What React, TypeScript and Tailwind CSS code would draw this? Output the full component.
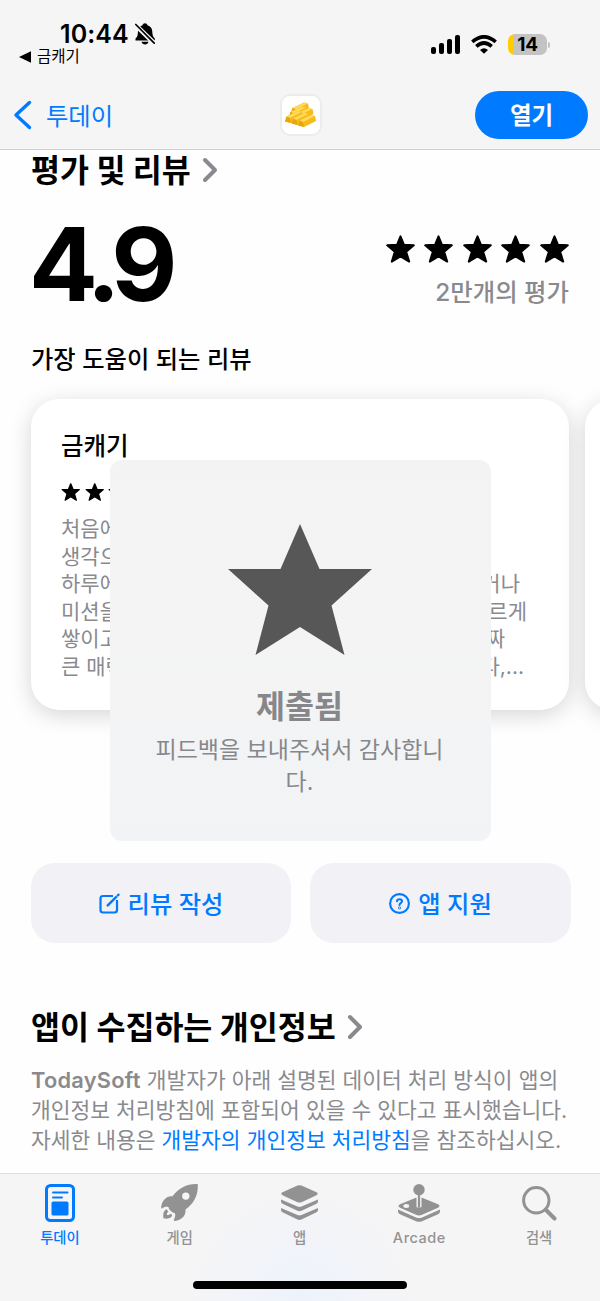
import type { ReactNode } from "react";
import clsx from "clsx";

const REVIEW_LINES = [
  { start: "처음에", end: "" },
  { start: "생각으", end: "" },
  { start: "하루에", end: "거나", pad: "pr-[19px]" },
  { start: "미션을", end: "르게", pad: "pr-[12px]" },
  { start: "쌓이고", end: "짜", pad: "pr-[34px]" },
  { start: "큰 매력", end: "다,...", pad: "pr-[15px]" },
];

function Star({ className }: { className: string }) {
  return (
    <svg viewBox="0 0 29 28" className={className} fill="currentColor" stroke="currentColor" strokeWidth="2" strokeLinejoin="round">
      <path d="M14.5 1.300 18 9.800 27.800 10.300 20.200 16.800 23.200 26.600 14.500 21.400 5.800 26.600 8.800 16.800 1.200 10.300 11 9.800Z" />
    </svg>
  );
}

function Chevron() {
  return (
    <svg viewBox="0 0 16 26" className="h-[26px] w-[16px] text-[#8a8a8e]" fill="none" stroke="currentColor" strokeWidth="4" strokeLinecap="round" strokeLinejoin="round">
      <path d="M3 3 13 13 3 23" />
    </svg>
  );
}

function StatusBar() {
  return (
    <div className="flex h-[80px] justify-between">
      <div className="pt-[18px]">
        <div className="flex h-[30px] items-center pt-px pl-[60px]">
          <span className="text-[25px] leading-[30px] font-semibold tracking-[0.100px]">10:44</span>
          <svg viewBox="0 0 20 22" className="ml-[6px] h-[22px] w-[20px]">
            <path d="M.5 17.500V15.500C3 13.500 2.700 11 3 8 3.400 4.600 5.500 3 7.500 2.300 8-.4 12-.4 12.500 2.300 15.500 3.300 17 5.400 17.200 8 17.500 11.500 17.500 13.500 19.800 15.500V17.500Z" />
            <path d="M6.500 18.800H13.500C12.800 22.300 7.300 22.300 6.500 18.800Z" />
            <path d="M0 1.500 20 21" stroke="#f5f5f6" strokeWidth="4.600" />
            <path d="M.8 1.500 19.200 20.200" stroke="black" strokeWidth="1.700" strokeLinecap="round" />
          </svg>
        </div>
        <div className="flex h-[17px] items-center gap-[6px] pl-[19px]">
          <svg viewBox="0 0 11 11" className="size-[12px]">
            <path d="M0 5.500 11 .3V10.700Z" />
          </svg>
          <span className="text-[15.500px] leading-[17px]">금캐기</span>
        </div>
      </div>
      <div className="mt-[34px] flex h-[21px] items-center pr-[50px]">
        <div className="flex h-[19px] items-end gap-[3px]">
          <div className="h-[7px] w-[5px] rounded-[2px] bg-black" />
          <div className="h-[11px] w-[5px] rounded-[2px] bg-black" />
          <div className="h-[15px] w-[5px] rounded-[2px] bg-black" />
          <div className="h-[19px] w-[5.500px] rounded-[2px] bg-black" />
        </div>
        <svg viewBox="0 0 26 19" className="ml-[11px] h-[19px] w-[26px]" fill="none" stroke="black" strokeWidth="3.600">
          <path d="M1.300 6.800Q13-3.200 24.700 6.800" />
          <path d="M5.300 11.400Q13 4.600 20.700 11.400" />
          <path d="M13 18.800 9 15Q13 11.600 17 15Z" fill="black" stroke="none" />
        </svg>
        <div className="ml-[11px] flex h-[21px] w-[39px] items-center justify-center overflow-hidden rounded-[7px] bg-[linear-gradient(to_right,#ffcc00_6px,#c3c3c4_6px)]">
          <span className="text-[19px] leading-[21px] font-bold tracking-[-0.200px]">14</span>
        </div>
        <div className="ml-[1px] h-[6px] w-[2px] rounded-r-full bg-[#c3c3c4]" />
      </div>
    </div>
  );
}

// back to front, top-left corner of each bar's end face
const GOLD_BARS = [
  [9, 12],
  [7, 16],
  [13.5, 17.5],
  [3, 20.5],
  [9.5, 22.5],
  [16, 24.5],
];

function AppIcon() {
  return (
    <div className="flex size-[42px] items-center justify-center rounded-[10px] border-2 border-[#ececed] bg-white">
      <svg viewBox="0 0 38 38" className="size-[38px]">
        {GOLD_BARS.map(([x, y]) => (
          <g key={`${x}-${y}`} transform={`translate(${x} ${y})`}>
            <path d="M0 5 1.500 0 13-5.500 17-4.500 18 .5 6 6.500Z" fill="#f7b91c" />
            <path d="M1.500 0 13-5.500 17-4.500 5 1.500Z" fill="#ffda55" />
            <path d="M1.500 0 5 1.500 6 6.500 0 5Z" fill="#e8a413" />
          </g>
        ))}
      </svg>
    </div>
  );
}

function NavBar() {
  return (
    <div className="grid h-[69px] grid-cols-[188px_199px_188px] items-center pr-[12px] pl-[13px]">
      <button className="flex items-center gap-[14px] text-[#007aff]">
        <svg viewBox="0 0 19 30" className="h-[30px] w-[19px]" fill="none" stroke="currentColor" strokeWidth="3.400" strokeLinecap="round" strokeLinejoin="round">
          <path d="M16.500 2.500 3 15 16.500 27.500" />
        </svg>
        <span className="pt-[2px] text-[24.300px] leading-[30px]">투데이</span>
      </button>
      <div className="flex justify-center">
        <AppIcon />
      </div>
      <button className="h-[48px] w-[113px] justify-self-end rounded-full bg-[#007aff] pt-[2px] text-[23.500px] leading-[46px] font-bold text-white">
        열기
      </button>
    </div>
  );
}

function ReviewCard() {
  return (
    <div className="h-[311px] w-[538px] shrink-0 rounded-[28px] bg-white px-[30px] pt-[30px] shadow-[0_5px_22px_rgba(0,0,0,0.16)]">
      <h3 className="text-[24.500px] leading-[34px] font-medium">금캐기</h3>
      <div className="mt-[20px] flex gap-[4px]">
        {[0, 1, 2, 3, 4].map((i) => (
          <Star key={i} className="h-[18px] w-[19.500px]" />
        ))}
      </div>
      <div className="mt-[14px] text-[21px] leading-[27.500px] text-[#8a8a8e]">
        {REVIEW_LINES.map((line) => (
          <div key={line.start} className={clsx("flex justify-between", line.pad)}>
            <span>{line.start}</span>
            <span>{line.end}</span>
          </div>
        ))}
      </div>
    </div>
  );
}

function ActionButton({ icon, label }: { icon: ReactNode; label: string }) {
  return (
    <button className="flex h-[80px] items-center justify-center gap-[8px] rounded-[24px] bg-[#f1f1f6] text-[24.300px] leading-[34px] font-medium text-[#007aff]">
      {icon}
      <span className="pt-[2px]">{label}</span>
    </button>
  );
}

function SubmittedToast() {
  return (
    <div className="absolute top-[460px] left-[110px] flex h-[381px] w-[381px] flex-col items-center rounded-[12px] bg-linear-to-b from-[#f3f3f3] via-[#f4f4f4] to-[#f1f3f6] pt-[64px] pr-[2px] text-[#87878b]">
      <svg viewBox="0 0 144 131" className="h-[131px] w-[144px]">
        <path d="M72 0 91.500 45H144L103.500 81.500 116.500 131 72 103 27.500 131 40.500 81.500 0 45H52.500Z" fill="#575757" />
      </svg>
      <p className="mt-[31px] text-[31.500px] leading-[42px] font-bold">제출됨</p>
      <p className="mt-[6px] text-center text-[23px] leading-[32px]">
        피드백을 보내주셔서 감사합니
        <br />
        다.
      </p>
    </div>
  );
}

const TABS: { label: string; icon: ReactNode; active?: boolean }[] = [
  {
    label: "투데이",
    active: true,
    icon: (
      <svg viewBox="0 0 30 38" className="h-[38px] w-[30px]" fill="none" stroke="currentColor">
        <rect x="1.500" y="1.500" width="27" height="35" rx="4" strokeWidth="3" />
        <path d="M8 8.500H22.500M8 13.500H17" strokeWidth="2" strokeLinecap="round" />
        <rect x="6.500" y="17.500" width="17" height="14" rx="1.500" fill="currentColor" stroke="none" />
      </svg>
    ),
  },
  {
    label: "게임",
    icon: (
      <svg viewBox="0 0 37 37" className="size-[37px]" fill="currentColor">
        <path
          fillRule="evenodd"
          d="M36.800.9C36.800.3 36.600.1 36 .1 26-.2 17.500 4.200 11.500 12.300 6 11.300.5 16.500.2 23.500.2 24.300.8 24.600 1.500 24.200 3.500 22.800 5.500 22.600 7.500 23 7.500 25.500 11.500 29 14 29.300 14.500 31.500 14 33.500 13 35.500 12.600 36.400 13 37 14 36.900 20.500 36 25 32 24.500 25.500 33 19.500 37.200 11 36.800.9ZM24.800 8.400A3.700 3.700 0 1 1 24.800 15.800 3.700 3.700 0 1 1 24.800 8.400Z"
        />
        <path d="M5.800 25.200C2.300 26.500 2 29.500 2.400 34.300 7 35.200 10.800 34.400 11.200 30.800L9.200 29.700C8.500 31 7.600 31.200 6 31 5.700 29.300 6.100 28.600 7.400 28Z" />
      </svg>
    ),
  },
  {
    label: "앱",
    icon: (
      <svg viewBox="0 0 37 37" className="size-[37px]" fill="currentColor">
        <path d="M16.500 1.600Q18.500.7 20.500 1.600L35 8.100Q38.500 9.800 35 11.500L20.500 18.200Q18.500 19 16.500 18.200L2 11.500Q-1.500 9.800 2 8.100Z" />
        <path d="M0 15.500 16.500 22.500Q18.500 23.300 20.500 22.500L37 15.500V17.500Q37 19 35 20L20.500 26.800Q18.500 27.600 16.500 26.800L2 20Q0 19 0 17.500Z" />
        <path d="M0 24 16.500 31Q18.500 31.800 20.500 31L37 24V26Q37 27.500 35 28.500L20.500 35.500Q18.500 36.300 16.500 35.500L2 28.500Q0 27.500 0 26Z" />
      </svg>
    ),
  },
  {
    label: "Arcade",
    icon: (
      <svg viewBox="0 0 42 38" className="h-[38px] w-[42px]" fill="currentColor">
        <path d="M18.500 13.400 2 20.300Q-1 22 2 23.700L18 30.800Q21 32 24 30.800L40 23.700Q43 22 40 20.300L23.500 13.400V23.200H18.500Z" />
        <path d="M0 25.500 18 33.500Q21 34.600 24 33.500L42 25.500V28Q41.500 29.500 39.500 30.500L24 37.200Q21 38.400 18 37.200L2.500 30.500Q.5 29.500 0 28Z" />
        <circle cx="21" cy="5.700" r="5.700" />
        <path d="M19.900 10H22.100V23H19.900Z" />
        <ellipse cx="8.300" cy="22" rx="2.900" ry="1.900" fill="#f5f5f5" />
      </svg>
    ),
  },
  {
    label: "검색",
    icon: (
      <svg viewBox="0 0 35 35" className="mt-[2px] size-[35px]" fill="none" stroke="currentColor" strokeLinecap="round">
        <circle cx="14.300" cy="14.300" r="12.700" strokeWidth="3" />
        <path d="M24 24 32.500 32.500" strokeWidth="4" />
      </svg>
    ),
  },
];

export default function App() {
  return (
    <div className="relative flex h-[1301px] w-[600px] flex-col overflow-hidden bg-[#fefefe] font-['Inter','Noto_Sans_CJK_KR',sans-serif] text-black">
      <header className="h-[150px] shrink-0 border-b border-[#cfcfd1] bg-[#f5f5f6]">
        <StatusBar />
        <NavBar />
      </header>

      <main className="flex-1 overflow-hidden px-[31px]">
        <div className="flex h-[40px] items-center gap-[11px]">
          <h2 className="pt-[2px] text-[31.500px] leading-[40px] font-bold">평가 및 리뷰</h2>
          <Chevron />
        </div>

        <div className="flex h-[140px] justify-between pt-[14px]">
          <div className="-ml-[2px] text-[102px] leading-[120px] font-bold tracking-[-8px]">4.9</div>
          <div className="flex flex-col items-end pt-[31px]">
            <div className="flex gap-[9.600px]">
              {[0, 1, 2, 3, 4].map((i) => (
                <Star key={i} className="h-[28px] w-[29px]" />
              ))}
            </div>
            <div className="mt-[12px] text-[24.400px] leading-[34px] font-medium text-[#8a8a8e]">2만개의 평가</div>
          </div>
        </div>

        <h3 className="mt-[12px] text-[24.300px] leading-[34px] font-medium">가장 도움이 되는 리뷰</h3>

        {/* Review carousel */}
        <div className="mt-[23px] flex gap-[16px]">
          <ReviewCard />
          <div className="h-[311px] w-[538px] shrink-0 rounded-[28px] bg-white shadow-[0_5px_22px_rgba(0,0,0,0.16)]" />
        </div>

        <div className="mt-[153px] grid grid-cols-[260px_261px] gap-[19px]">
          <ActionButton
            label="리뷰 작성"
            icon={
              <svg viewBox="0 0 21 21" className="size-[21px]" fill="none" stroke="currentColor" strokeWidth="2.200" strokeLinejoin="round">
                <path d="M14 3H4Q1.500 3 1.500 5.500V17Q1.500 19.500 4 19.500H15.500Q18 19.500 18 17V7" />
                <path d="M8 13.200 17.800 3.400" strokeWidth="2.400" />
                <path d="M18.800 2.400 19.600 1.600" strokeLinecap="round" />
              </svg>
            }
          />
          <ActionButton
            label="앱 지원"
            icon={
              <svg viewBox="0 0 21 21" className="size-[21px]" fill="none" stroke="currentColor" strokeWidth="2.100" strokeLinecap="round">
                <circle cx="10.500" cy="10.500" r="9.400" />
                <path d="M8 8.300C8.200 5.400 13 5.600 13 8.200 13 10 10.500 10 10.500 12" />
                <circle cx="10.500" cy="15" r=".4" />
              </svg>
            }
          />
        </div>

        <div className="mt-[63px] flex h-[42px] items-center gap-[11px]">
          <h2 className="pt-[2px] text-[31.500px] leading-[42px] font-bold">앱이 수집하는 개인정보</h2>
          <Chevron />
        </div>
        <p className="mt-[17px] text-[21.480px] leading-[30px] whitespace-nowrap text-[#8a8a8e]">
          <span className="text-[21.800px] font-semibold tracking-[0.250px]">TodaySoft</span> 개발자가 아래 설명된 데이터 처리 방식이 앱의
          <br />
          개인정보 처리방침에 포함되어 있을 수 있다고 표시했습니다.
          <br />
          자세한 내용은 <a className="text-[#007aff]">개발자의 개인정보 처리방침</a>을 참조하십시오.
        </p>
      </main>

      <footer className="flex h-[128px] shrink-0 flex-col border-t border-[#dedee0] bg-[#f5f5f6] bg-[radial-gradient(circle_at_50%_100%,#edf2fb_0px,#f5f5f6_110px)]">
        <nav className="grid grid-cols-5 pt-[10px] pr-[1px]">
          {TABS.map((tab) => (
            <button key={tab.label} className={clsx("flex flex-col items-center", tab.active ? "text-[#007aff]" : "text-[#929293]")}>
              <span className="h-[38px]">{tab.icon}</span>
              <span
                className={clsx(
                  "mt-[6px] leading-[20px] font-medium",
                  tab.label === "Arcade" ? "text-[14.500px] tracking-[0.500px]" : "text-[14.300px]",
                )}
              >
                {tab.label}
              </span>
            </button>
          ))}
        </nav>
        <div className="mt-[33px] h-[8px] w-[214px] self-center rounded-full bg-black" />
      </footer>

      <SubmittedToast />
    </div>
  );
}
